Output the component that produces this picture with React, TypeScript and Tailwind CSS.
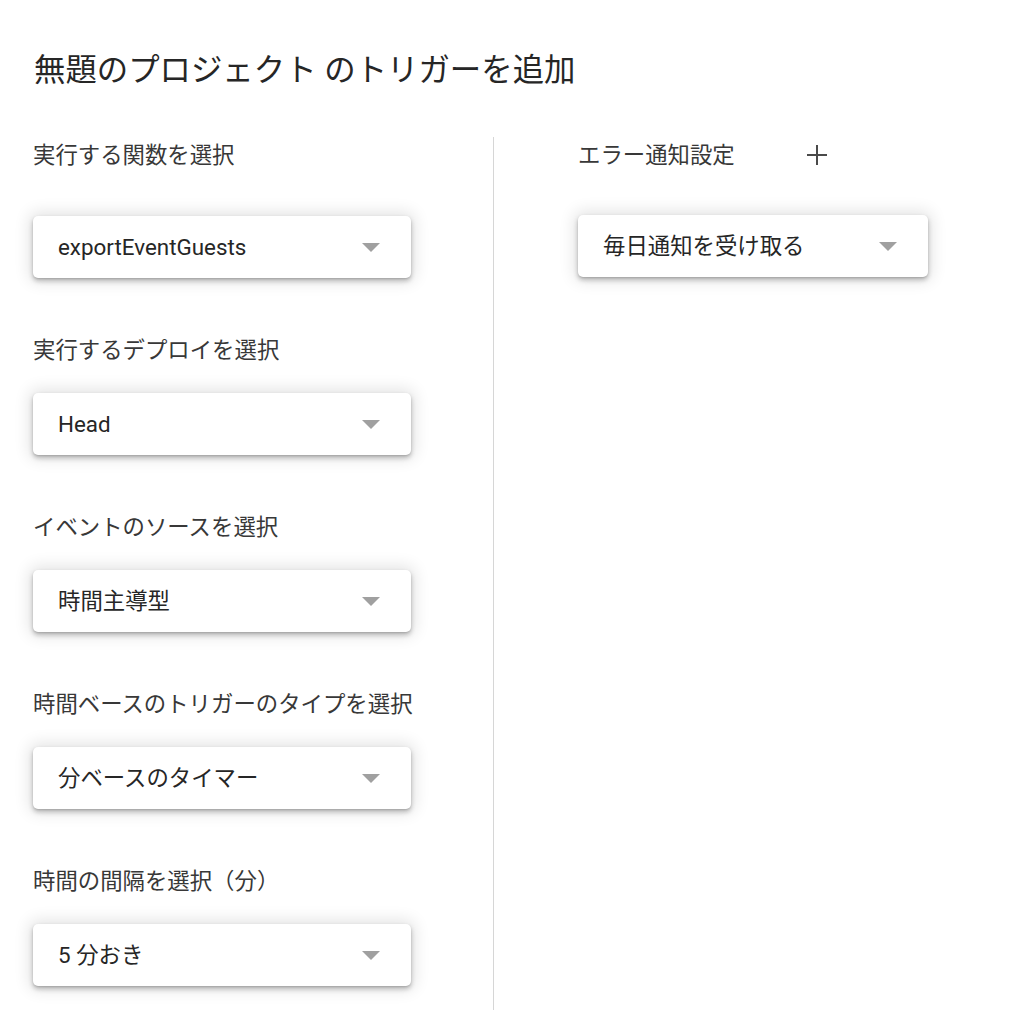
import React from 'react';

const font = { fontFamily: 'Roboto, "Noto Sans CJK JP", sans-serif' };

const Arrow: React.FC = () => (
  <svg width="18" height="9" viewBox="0 0 18 9" className="shrink-0">
    <path d="M0 0 L18 0 L9 9 Z" fill="#a0a0a0" />
  </svg>
);

const Select: React.FC<{ value: string; width: string }> = ({ value, width }) => (
  <div
    className={`flex h-[62px] ${width} items-center justify-between rounded-[5px] bg-white pl-[25px] pr-[31px] shadow-[0_0_16px_4px_rgba(0,0,0,0.11),0_3px_5px_0_rgba(0,0,0,0.24),0_1px_2px_0_rgba(0,0,0,0.12)]`}
  >
    <span className="text-[22.4px] leading-[30px] text-[#262626]">{value}</span>
    <Arrow />
  </div>
);

const sections = [
  { label: '実行する関数を選択', value: 'exportEventGuests' },
  { label: '実行するデプロイを選択', value: 'Head' },
  { label: 'イベントのソースを選択', value: '時間主導型' },
  { label: '時間ベースのトリガーのタイプを選択', value: '分ベースのタイマー' },
  { label: '時間の間隔を選択（分）', value: '5 分おき' },
];

export default function App() {
  return (
    <div className="h-[1010px] w-[1024px] overflow-hidden bg-white" style={font}>
      <h1 className="pl-[34px] pt-[50px] text-[31.4px] font-normal leading-[42px] text-[#262626]">
        無題のプロジェクト のトリガーを追加
      </h1>

      <div className="mt-[45px] flex">
        <div className="ml-[33px] flex w-[378px] flex-col gap-[57px] pt-[3px]">
          {sections.map((s, i) => (
            <div key={s.label} className="flex flex-col">
              <div
                className={`h-[30px] whitespace-nowrap text-[22.4px] leading-[30px] text-[#383838] ${
                  i === 0 ? 'mb-[46px]' : 'mb-[28px]'
                }`}
              >
                {s.label}
              </div>
              <Select value={s.value} width="w-[378px]" />
            </div>
          ))}
        </div>

        <div className="ml-[82px] h-[900px] w-px bg-[#d6d6d6]" />

        <div className="ml-[84px] flex flex-col pt-[3px]">
          <div className="mb-[45px] flex h-[30px] items-center">
            <span className="text-[22.4px] leading-[30px] text-[#383838]">エラー通知設定</span>
            <svg width="22" height="22" viewBox="0 0 22 22" className="ml-[71px]">
              <path d="M11 1 V21 M1 11 H21" stroke="#4a4a4a" strokeWidth="2" />
            </svg>
          </div>
          <Select value="毎日通知を受け取る" width="w-[350px]" />
        </div>
      </div>
    </div>
  );
}
